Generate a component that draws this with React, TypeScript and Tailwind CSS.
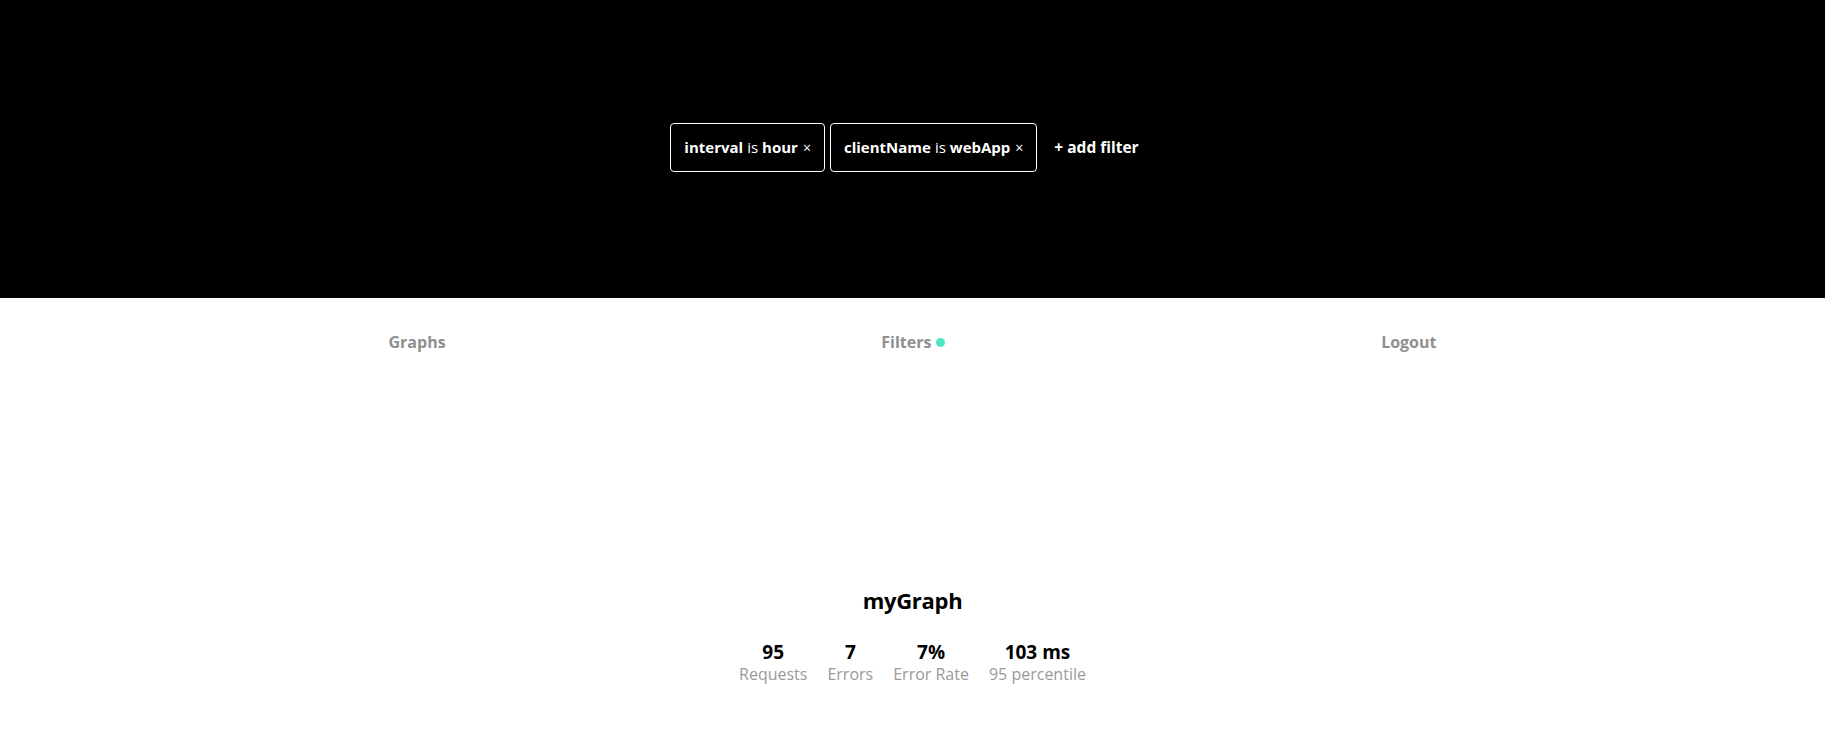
import React from 'react';

const FILTERS = [
    { key: 'interval', value: 'hour' },
    { key: 'clientName', value: 'webApp' },
];

const STATS = [
    { value: '95', label: 'Requests' },
    { value: '7', label: 'Errors' },
    { value: '7%', label: 'Error Rate' },
    { value: '103 ms', label: '95 percentile' },
];

export default function App() {
    return (
        <div className="min-h-screen bg-white" style={{ fontFamily: '"Open Sans", "Noto Sans", sans-serif' }}>
            {/* Filter bar */}
            <div className="h-[298px] bg-black flex items-start justify-center pt-[123px] pr-[16px]">
                <div className="flex items-center gap-[5px]">
                    {FILTERS.map(f => (
                        <div
                            key={f.key}
                            className="h-[49px] flex items-center px-[13px] rounded-[4px] border border-white text-white text-[15px]"
                        >
                            <span className="font-bold">{f.key}</span>
                            <span className="ml-[4px]">is</span>
                            <span className="font-bold ml-[4px]">{f.value}</span>
                            <span className="ml-[5px] text-[14px]">×</span>
                        </div>
                    ))}
                    <button className="ml-[12px] text-white font-bold text-[15.5px]">+ add filter</button>
                </div>
            </div>

            {/* Nav */}
            <nav className="mx-auto w-[1048px] flex items-center justify-between h-[90px] pb-[2px] text-[16px] font-bold text-[#8f8f8f]">
                <a>Graphs</a>
                <a className="flex items-center gap-[5px]">
                    Filters
                    <span className="w-[9px] h-[9px] rounded-full bg-[#50e3c2]" />
                </a>
                <a>Logout</a>
            </nav>

            {/* Graph */}
            <section className="flex flex-col items-center pt-[198px]">
                <h2 className="text-[22px] font-bold text-black leading-[28px] tracking-[-0.3px]">myGraph</h2>
                <div className="flex gap-[20px] mt-[27px]">
                    {STATS.map(s => (
                        <div key={s.label} className="flex flex-col items-center">
                            <span className="text-[19px] font-bold text-black leading-[22px]">{s.value}</span>
                            <span className="text-[16px] text-[#9a9a9a] leading-[22px]">{s.label}</span>
                        </div>
                    ))}
                </div>
            </section>
        </div>
    );
}
